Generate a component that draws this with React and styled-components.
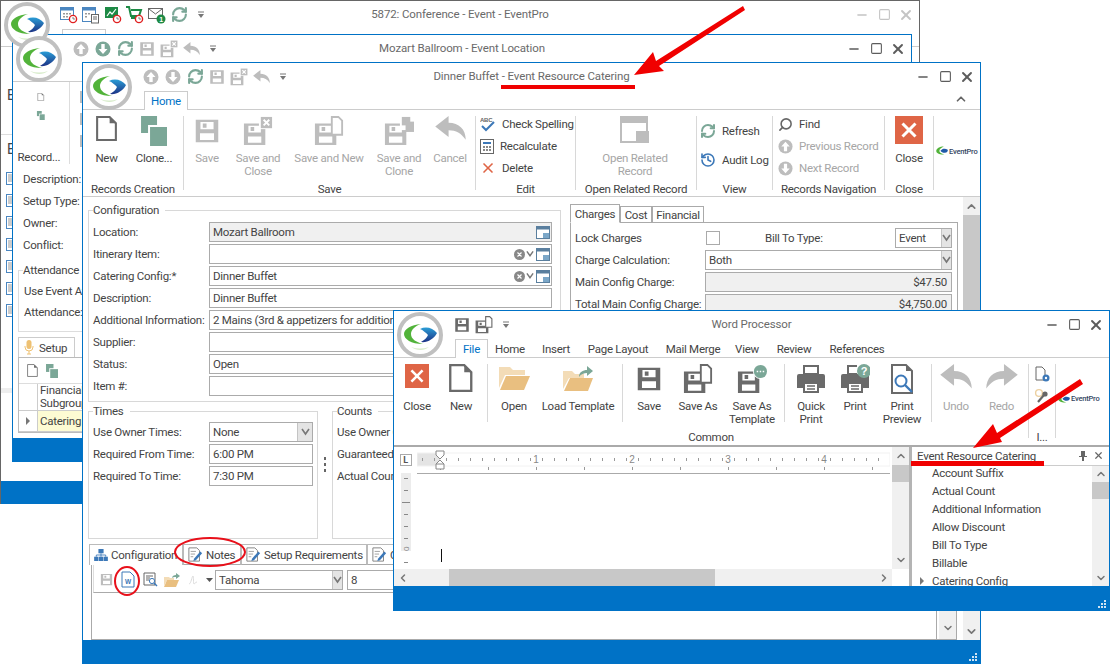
import React from 'react';
import styled, { createGlobalStyle } from 'styled-components';
import { X, RefreshCw, History, Search, ChevronUp, ChevronDown, ChevronLeft, ChevronRight, Minus, Square } from 'lucide-react';

const GlobalStyle = createGlobalStyle`
  html, body { margin: 0; padding: 0; background: #fff; }
  body { font-family: Roboto, "Liberation Sans", sans-serif; font-size: 11.5px; letter-spacing: -0.25px; color: #444; }
`;

const BLUE = '#0072c6';
const TEAL = '#7ba797';
const LIGHT = '#bdbdbd';
const DARK = '#6a6a6a';
const ORANGE = '#df6546';

const Desktop = styled.div`
  position: relative;
  width: 1110px;
  height: 664px;
  overflow: hidden;
  background: #fff;
`;

const Window = styled.div`
  position: absolute;
  left: ${p => p.$x}px;
  top: ${p => p.$y}px;
  width: ${p => p.$w}px;
  height: ${p => p.$h}px;
  box-sizing: border-box;
  border: 1px solid ${p => p.$border || BLUE};
  border-bottom: none;
  background: #fff;
  display: flex;
  flex-direction: column;
  overflow: hidden;
`;

const LogoSpot = styled.div`
  position: absolute;
  left: ${p => p.$x ?? 3}px;
  top: ${p => p.$y ?? 1}px;
  z-index: 2;
`;

const TitleRow = styled.div`
  display: grid;
  grid-template-columns: 1fr auto 1fr;
  align-items: center;
  height: ${p => p.$h || 27}px;
  flex: none;
`;

const QuickBar = styled.div`
  display: flex;
  align-items: center;
  padding-left: 57px;
`;

const QuickBtn = styled.span`
  width: 22px;
  height: 20px;
  flex: none;
  display: flex;
  align-items: center;
  justify-content: center;
`;

const Title = styled.div`
  font-size: 11.5px;
  letter-spacing: -0.12px;
  color: #6a6a6a;
  white-space: nowrap;
  padding-bottom: 2px;
`;

const WinButtons = styled.div`
  justify-self: end;
  display: flex;
  padding-right: 2px;
  color: ${p => p.$dim ? '#c4c4c4' : '#5c5c5c'};
`;

const WinBtn = styled.span`
  width: 22px;
  height: 20px;
  display: flex;
  align-items: center;
  justify-content: center;
`;

const TabRow = styled.div`
  display: flex;
  align-items: flex-end;
  height: ${p => p.$h || 20}px;
  flex: none;
  box-sizing: border-box;
  border-bottom: 1px solid #ccc;
  padding-left: ${p => p.$pad || 61}px;
`;

const TopTab = styled.div`
  height: 100%;
  box-sizing: border-box;
  display: flex;
  align-items: center;
  justify-content: center;
  width: ${p => p.$w}px;
  margin-bottom: -1px;
  background: ${p => p.$active ? '#fff' : 'transparent'};
  color: ${p => p.$active ? BLUE : '#444'};
  border: 1px solid ${p => p.$active ? '#ccc' : 'transparent'};
  border-bottom: none;
`;

const CollapseBtn = styled.span`
  margin: 0 12px 3px auto;
  display: flex;
  color: #666;
`;

const Ribbon = styled.div`
  display: flex;
  height: ${p => p.$h || 87}px;
  flex: none;
  box-sizing: border-box;
  padding-top: 6px;
  border-bottom: ${p => p.$thick ? '2px solid #aaa' : '1px solid #ccc'};
`;

const Group = styled.div`
  width: ${p => p.$w}px;
  flex: none;
  display: flex;
  flex-direction: column;
`;

const GroupBody = styled.div`
  height: 66px;
  flex: none;
  display: flex;
  padding-left: ${p => p.$pad || 0}px;
`;

const GroupLabel = styled.div`
  text-align: center;
  line-height: 14px;
  white-space: nowrap;
`;

const Sep = styled.div`
  width: 1px;
  height: ${p => p.$h || 74}px;
  flex: none;
  background: #d8d8d8;
`;

const BigBtn = styled.div`
  width: ${p => p.$w}px;
  flex: none;
  display: flex;
  flex-direction: column;
  align-items: center;
  text-align: center;
  color: ${p => p.$off ? '#a6a6a6' : '#444'};
  line-height: 13px;
`;

const BigIcon = styled.div`
  height: 36px;
  flex: none;
  display: flex;
  align-items: flex-start;
  justify-content: center;
`;

const SmallStack = styled.div`
  display: flex;
  flex-direction: column;
  gap: ${p => p.$gap ?? 6}px;
  padding-top: ${p => p.$top ?? 0}px;
  padding-left: ${p => p.$pad || 0}px;
`;

const SmallBtn = styled.div`
  height: 16px;
  display: flex;
  align-items: center;
  gap: 6px;
  white-space: nowrap;
  color: ${p => p.$off ? '#a6a6a6' : '#444'};
`;

const Status = styled.div`
  height: ${p => p.$h || 22}px;
  flex: none;
  margin-top: auto;
  background: ${BLUE};
  display: flex;
  justify-content: flex-end;
  align-items: flex-end;
  padding: 0 2px 2px 0;
`;

/* back windows, only the left strip shows */
const BackRow = styled.div`
  height: ${p => p.$h || 22}px;
  flex: none;
  display: flex;
  align-items: center;
  padding-left: ${p => p.$pad || 5}px;
  white-space: nowrap;
`;

const BackStrip = styled.div`
  height: ${p => p.$h}px;
  flex: none;
  box-sizing: border-box;
  border-bottom: ${p => p.$line ? '1px solid #ddd' : 'none'};
  padding: ${p => p.$pad || '0'};
  font-size: 14px;
`;

const GrayBlock = styled.div`
  height: 5px;
  width: 11px;
  background: #eee;
  flex: none;
`;

const BackFooter = styled.div`
  height: 20px;
  flex: none;
  margin-top: auto;
  display: flex;
  align-items: center;
  gap: 6px;
  padding-left: 12px;
`;

const BackRibbon = styled.div`
  height: 86px;
  flex: none;
  display: flex;
`;

const BackGroup = styled.div`
  width: 56px;
  flex: none;
  display: flex;
  flex-direction: column;
  align-items: center;
  gap: 10px;
  padding-top: 11px;
  border-right: 1px solid #ddd;
  margin-bottom: 4px;
`;

const BackGroupLabel = styled.div`
  margin-top: 20px;
  width: 56px;
  padding-left: 9px;
  white-space: nowrap;
`;

const BackIcons = styled.div`
  display: flex;
  flex-direction: column;
  gap: 6px;
  padding: 7px 0 0 8px;
`;

const BackFields = styled.div`
  display: flex;
  flex-direction: column;
  padding: 0 0 0 9px;
`;

const BackFieldset = styled.fieldset`
  margin: 8px 0 0 5px;
  height: 68px;
  box-sizing: border-box;
  border: 1px solid #ddd;
  padding: 3px 0 0 4px;
  min-width: 0;
  flex: none;
`;

const BackTabs = styled.div`
  display: flex;
  height: 20px;
  margin: 5px 0 0 5px;
  flex: none;
`;

const BackTab = styled.div`
  display: flex;
  align-items: center;
  gap: 5px;
  box-sizing: border-box;
  width: 57px;
  padding-left: 5px;
  border: 1px solid #ccc;
  border-bottom: none;
`;

const BackPanel = styled.div`
  margin-left: 5px;
  border: 1px solid #bbb;
  height: 76px;
  box-sizing: border-box;
  flex: none;
`;

const BackToolbar = styled.div`
  height: 25px;
  display: flex;
  align-items: center;
  gap: 8px;
  padding-left: 8px;
  border-bottom: 1px solid #ddd;
`;

const BackHead = styled.div`
  height: 26px;
  display: flex;
  border-bottom: 1px solid #ccc;
`;

const BackCorner = styled.div`
  width: 18px;
  flex: none;
  border-right: 1px solid #ccc;
  display: flex;
  align-items: center;
  justify-content: center;
  color: #666;
`;

const BackCell = styled.div`
  padding-left: 2px;
  line-height: 13px;
  flex: 1;
  background: ${p => p.$yellow ? '#fdfbd3' : 'transparent'};
  display: flex;
  align-items: center;
  white-space: nowrap;
`;

const BackGridRow = styled.div`
  height: 20px;
  display: flex;
  border-bottom: 1px solid #ccc;
`;

/* main form */
const FormTop = styled.div`
  display: flex;
  height: 347px;
  flex: none;
`;

const Body = styled.div`
  flex: 1;
  display: flex;
  min-height: 0;
`;

const Main = styled.div`
  flex: 1;
  min-width: 0;
  display: flex;
  flex-direction: column;
`;

const LeftCol = styled.div`
  width: 481px;
  flex: none;
  box-sizing: border-box;
  padding: 7px 0 0 5px;
  display: flex;
  flex-direction: column;
`;

const FieldBox = styled.fieldset`
  margin: 0;
  box-sizing: border-box;
  width: ${p => p.$w}px;
  height: ${p => p.$h}px;
  border: 1px solid #d8d8d8;
  padding: ${p => p.$top ?? 5}px ${p => p.$right ?? 8}px 0 4px;
  min-width: 0;
  flex: none;
`;

const Legend = styled.legend`
  padding: 0 6px 0 0;
  line-height: 13px;
`;

const FormRows = styled.div`
  display: grid;
  grid-template-columns: 116px 1fr;
  grid-auto-rows: 20px;
  row-gap: ${p => p.$gap ?? 2}px;
  align-items: center;
  white-space: nowrap;
`;

const Input = styled.div`
  height: 20px;
  box-sizing: border-box;
  border: 1px solid #ababab;
  background: ${p => p.$gray ? '#f0f0f0' : '#fff'};
  display: flex;
  align-items: center;
  padding-left: 3px;
  overflow: hidden;
  justify-content: ${p => p.$end ? 'flex-end' : 'flex-start'};
  padding-right: ${p => p.$end ? '4px' : '0'};
  white-space: nowrap;
  ${p => p.$w ? `width: ${p.$w}px; flex: none;` : ''}
`;

const InputText = styled.span`
  flex: 1;
  min-width: 0;
  overflow: hidden;
`;

const Adorn = styled.span`
  width: ${p => p.$w || 14}px;
  height: 100%;
  flex: none;
  display: flex;
  align-items: center;
  justify-content: center;
  color: #777;
  background: ${p => p.$gray ? '#e4e4e4' : 'transparent'};
  border-left: ${p => p.$gray ? '1px solid #c4c4c4' : 'none'};
`;

const LowerRow = styled.div`
  display: flex;
  margin-top: 3px;
  height: 136px;
`;

const Splitter = styled.div`
  width: 14px;
  flex: none;
  display: flex;
  flex-direction: column;
  align-items: center;
  gap: 3px;
  padding-top: 52px;
  margin-top: 0;
`;

const Dot = styled.span`
  width: 2px;
  height: 3px;
  background: #666;
`;

const RightCol = styled.div`
  flex: 1;
  min-width: 0;
  padding: 6px 5px 0 6px;
  display: flex;
  flex-direction: column;
`;

const PageTabs = styled.div`
  display: flex;
  align-items: flex-end;
  height: 19px;
  flex: none;
`;

const PageTab = styled.div`
  width: ${p => p.$w}px;
  height: ${p => p.$active ? 19 : 17}px;
  box-sizing: border-box;
  border: 1px solid #aaa;
  border-bottom: ${p => p.$active ? '1px solid #fff' : '1px solid #aaa'};
  margin-bottom: -1px;
  background: #fff;
  z-index: 1;
  display: flex;
  align-items: center;
  justify-content: center;
`;

const PagePanel = styled.div`
  flex: 1;
  border: 1px solid #aaa;
  padding: 5px 5px 0 4px;
`;

const ChargeGrid = styled(FormRows)`
  grid-template-columns: 130px 1fr;
`;

const LockCell = styled.div`
  display: flex;
  align-items: center;
  height: 20px;
`;

const Check = styled.span`
  width: 12px;
  height: 12px;
  border: 1px solid #aaa;
  margin-left: 1px;
  flex: none;
`;

const BillLabel = styled.span`
  margin-left: 45px;
  flex: 1;
`;

const VScroll = styled.div`
  width: 17px;
  flex: none;
  background: #f0f0f0;
  display: flex;
  flex-direction: column;
  overflow: hidden;
  align-self: stretch;
`;

const ScrollArrow = styled.div`
  height: ${p => p.$h || 18}px;
  flex: none;
  display: flex;
  align-items: center;
  justify-content: center;
  color: #777;
  margin-top: ${p => p.$end ? 'auto' : '0'};
`;

const ScrollThumb = styled.div`
  height: ${p => p.$h}px;
  flex: none;
  background: #c8c8c8;
`;

const NotesArea = styled.div`
  flex: 1;
  min-height: 0;
  display: flex;
  flex-direction: column;
  padding: 0 6px 0 6px;
`;

const NoteTabs = styled.div`
  display: flex;
  height: 21px;
  flex: none;
  align-items: flex-end;
  white-space: nowrap;
  overflow: hidden;
`;

const NoteTab = styled.div`
  width: ${p => p.$w}px;
  height: 21px;
  flex: none;
  box-sizing: border-box;
  display: flex;
  align-items: center;
  gap: 3px;
  padding-left: 4px;
  border: 1px solid #bbb;
  border-bottom: ${p => p.$active ? 'none' : '1px solid #aaa'};
  background: #fff;
  overflow: hidden;
  svg { flex: none; }
`;

const NotePanel = styled.div`
  flex: 1;
  min-height: 0;
  margin-left: 2px;
  border: 1px solid #aaa;
  border-top: none;
  display: flex;
  overflow: hidden;
`;

const NoteEditor = styled.div`
  flex: 1;
  min-width: 0;
  display: flex;
  flex-direction: column;
  border-right: 1px solid #aaa;
  margin-right: 2px;
`;

const NoteToolbar = styled.div`
  height: 28px;
  flex: none;
  margin-left: 1px;
  box-sizing: border-box;
  border-bottom: 1px solid #aaa;
  border-left: 1px solid #ddd;
  display: flex;
  align-items: center;
  padding: 2px 0 0 1px;
`;

const ToolIcon = styled.span`
  width: ${p => p.$w || 22}px;
  flex: none;
  display: flex;
  align-items: center;
  justify-content: center;
`;

const NoteScroll = styled(VScroll)`
  justify-content: flex-end;
`;

/* word processor */
const Workspace = styled.div`
  flex: 1;
  min-height: 0;
  display: flex;
`;

const DocPane = styled.div`
  flex: 1;
  min-width: 0;
  display: flex;
  flex-direction: column;
`;

const DocTop = styled.div`
  flex: 1;
  min-height: 0;
  display: flex;
`;

const RulerSide = styled.div`
  width: 23px;
  flex: none;
  display: flex;
  flex-direction: column;
  align-items: center;
  padding-top: 7px;
  gap: 7px;
`;

const CornerBtn = styled.span`
  width: 10px;
  height: 10px;
  border: 1px solid #aaa;
  display: flex;
  align-items: center;
  justify-content: center;
  font-size: 9px;
  font-weight: 700;
  line-height: 1;
  color: #555;
`;

const Page = styled.div`
  flex: 1;
  min-width: 0;
  display: flex;
  flex-direction: column;
`;

const Caret = styled.div`
  width: 1px;
  height: 13px;
  background: #111;
  margin: 75px 0 0 24px;
`;

const HScroll = styled.div`
  height: 17px;
  flex: none;
  background: #f0f0f0;
  display: flex;
  align-items: center;
  margin-right: 17px;
`;

const HArrow = styled.span`
  width: 17px;
  flex: none;
  display: flex;
  justify-content: center;
  color: #777;
  margin-left: ${p => p.$end ? 'auto' : '0'};
`;

const HThumb = styled.div`
  width: ${p => p.$w}px;
  height: 17px;
  flex: none;
  margin-left: 38px;
  background: #c8c8c8;
`;

const TaskPane = styled.div`
  width: 200px;
  flex: none;
  box-sizing: border-box;
  border-left: 3px solid #b4b4b4;
  display: flex;
  flex-direction: column;
`;

const TaskHead = styled.div`
  height: 18px;
  flex: none;
  box-sizing: border-box;
  display: flex;
  align-items: center;
  padding: 0 5px 1px 5px;
  gap: 6px;
`;

const TaskName = styled.span`
  flex: 1;
`;

const TaskBody = styled.div`
  flex: 1;
  min-height: 0;
  display: flex;
  overflow: hidden;
  border-top: 1px solid #ccc;
`;

const TaskList = styled.div`
  flex: 1;
  display: flex;
  flex-direction: column;
`;

const TaskItem = styled.div`
  height: 18px;
  flex: none;
  display: flex;
  align-items: center;
  position: relative;
  padding-left: 20px;
  margin-top: ${p => p.$first ? '-2px' : '0'};
`;

const Caretlet = styled.span`
  position: absolute;
  left: 8px;
  width: 0;
  height: 0;
  border-left: 4px solid #777;
  border-top: 4px solid transparent;
  border-bottom: 4px solid transparent;
`;

const RowCaret = styled(Caretlet)`
  position: static;
`;

const ExtraGroup = styled(Group)`
  align-items: center;
`;

const MiniLogoCell = styled.div`
  flex: 1;
  display: flex;
  align-items: center;
  padding: 0 0 ${p => p.$bottom ?? 16}px 2px;
`;

const MiniName = styled.span`
  font-size: 7.5px;
  font-weight: 500;
  letter-spacing: -0.2px;
  color: #33455f;
  margin-left: 1px;
`;

const Annotations = styled.svg`
  position: absolute;
  left: 0;
  top: 0;
  z-index: 5;
  pointer-events: none;
`;

/* icons */
const Logo = ({ s = 46 }) => (
  <svg width={s} height={s} viewBox="0 0 46 46">
    <defs>
      <linearGradient id="lens" x1="0" y1="0" x2="0" y2="1">
        <stop offset="0" stopColor="#2a9dd6" />
        <stop offset="1" stopColor="#1c3285" />
      </linearGradient>
    </defs>
    <circle cx="23" cy="23" r="21" fill="#fff" stroke="#c0c0c0" strokeWidth="4" />
    <path d="M24 12C14 13 7 17 7 22 7 27 14 32 26 32 19 30 14 27 14 22 14 18 18 14 24 12Z" fill="#52b33a" />
    <path d="M23 17C29 14 36 16 40 21 37 27 30 31 24 30 27 28 30 26 31 23 29 21 26 18 23 17Z" fill="url(#lens)" />
    <path d="M14 35C20 39 27 39 32 35 26 37 20 37 14 35Z" fill="#d8eccb" />
  </svg>
);

const MiniLogo = () => (
  <svg width="12" height="12" viewBox="0 0 46 46">
    <path d="M30 6C14 6 1 13 1 23 1 32 16 38 32 36 20 33 13 29 13 23 13 16 20 10 30 6Z" fill="#52b33a" />
    <path d="M17 22C24 13 35 12 45 18 46 23 43 27 38 29 30 32 23 29 17 22Z" fill="#1f5aa8" />
  </svg>
);

const DocIcon = ({ s = 24, c = DARK, w = 2 }) => (
  <svg width={s * 0.84} height={s} viewBox="0 0 20 24">
    <path d="M1 1H13L19 7V23H1Z" fill="#fff" stroke={c} strokeWidth={w} />
    <path d="M13 1V7H19Z" fill={c} />
  </svg>
);

const CloneIcon = ({ s = 30 }) => (
  <svg width={s * 0.87} height={s} viewBox="0 0 26 30">
    <rect x="0" y="0" width="16" height="17" fill={TEAL} />
    <rect x="7" y="9" width="19" height="21" fill="#fff" />
    <rect x="9" y="11" width="17" height="19" fill={TEAL} />
  </svg>
);

const Floppy = ({ x = 0, y = 0, k = 1, c }) => (
  <path
    transform={`translate(${x} ${y}) scale(${k})`}
    fill={c}
    fillRule="evenodd"
    d="M0 0H24V24H0ZM5 2.5V10H19V2.5ZM7.5 4H11.5V8.5H7.5ZM4.5 14.5V21.5H19.5V14.5Z"
  />
);

const SaveIcon = ({ kind, s = 30, c = LIGHT }) => (
  <svg width={s} height={s} viewBox="0 0 32 32">
    {!kind && <Floppy x={4} y={4} c={c} />}
    {kind && <Floppy x={1} y={8} k={0.95} c={c} />}
    {kind === 'close' && (
      <>
        <rect x="17" y="0" width="15" height="14" fill="#fff" />
        <rect x="19" y="1" width="12" height="12" fill={c} />
        <path d="M22 4l6 6M28 4l-6 6" stroke="#fff" strokeWidth="2" />
      </>
    )}
    {kind === 'new' && (
      <path d="M19 1h7l4 4v15H19Z" fill="#fff" stroke={c} strokeWidth="2" />
    )}
    {kind === 'clone' && (
      <>
        <rect x="17" y="0" width="15" height="15" fill="#fff" />
        <rect x="19" y="1" width="9" height="9" fill={c} />
        <rect x="23" y="6" width="9" height="11" fill={c} />
      </>
    )}
    {kind === 'dots' && (
      <>
        <circle cx="25" cy="8" r="8" fill="#fff" />
        <circle cx="25" cy="8" r="7" fill={TEAL} />
        <path d="M21 8h1.6M24.2 8h1.6M27.4 8h1.6" stroke="#fff" strokeWidth="1.8" />
      </>
    )}
  </svg>
);

const BackArrow = ({ s = 30, c = LIGHT, flip }) => (
  <svg width={s} height={s * 0.8} viewBox="0 0 32 26" style={flip ? { transform: 'scaleX(-1)' } : undefined}>
    <path d="M0 11L14 0V7C25 7 32 14 32 25 27 18 22 15 14 15V22Z" fill={c} />
  </svg>
);

const CircleArrow = ({ down, c = LIGHT, s = 16 }) => (
  <svg width={s} height={s} viewBox="0 0 16 16" style={down ? { transform: 'rotate(180deg)' } : undefined}>
    <circle cx="8" cy="8" r="7.5" fill={c} />
    <path d="M8 3L12.5 8H9.7V13H6.3V8H3.5Z" fill="#fff" />
  </svg>
);

const Caret2 = () => (
  <svg width="8" height="8" viewBox="0 0 8 8">
    <path d="M1 1h6" stroke="#777" strokeWidth="1" />
    <path d="M1 3h6L4 7Z" fill="#777" />
  </svg>
);

const Refresh = ({ s = 17 }) => <RefreshCw size={s} color={TEAL} strokeWidth={3} />;

const SpellIcon = () => (
  <svg width="16" height="16" viewBox="0 0 16 16">
    <text x="0" y="6" fontSize="6" fontWeight="700" fontFamily="Liberation Sans" fill="#666">ABC</text>
    <path d="M2 10l4 4 8-8" fill="none" stroke="#3c78b8" strokeWidth="2" />
  </svg>
);

const CalcIcon = () => (
  <svg width="14" height="15" viewBox="0 0 14 15">
    <rect x="0.5" y="0.5" width="13" height="14" fill="#fff" stroke="#666" />
    <rect x="3" y="3" width="8" height="2" fill="#3c78b8" />
    <path d="M3 7h2v2H3zM6 7h2v2H6zM9 7h2v2H9zM3 10h2v2H3zM6 10h2v2H6zM9 10h2v2H9z" fill="#888" />
  </svg>
);

const OpenRelatedIcon = () => (
  <svg width="30" height="28" viewBox="0 0 30 28">
    <path d="M1 1h26v25H1Z" fill="#fff" stroke={LIGHT} strokeWidth="2" />
    <rect x="1" y="1" width="26" height="6" fill={LIGHT} />
    <rect x="16" y="15" width="13" height="12" fill={LIGHT} />
  </svg>
);

const CloseBig = ({ s = 28 }) => (
  <svg width={s} height={s} viewBox="0 0 28 28">
    <rect width="28" height="28" fill={ORANGE} />
    <path d="M7.5 7.5l13 13M20.5 7.5l-13 13" stroke="#fff" strokeWidth="3" />
  </svg>
);

const Folder = () => (
  <svg width="31" height="28" viewBox="0 0 31 28">
    <path d="M0 3h11l3 3h12v5H6L0 24Z" fill="#f3dcb7" />
    <path d="M7 12h24l-6 14H1Z" fill="#e9bf80" />
  </svg>
);

const LoadFolder = () => (
  <svg width="31" height="28" viewBox="0 0 31 28">
    <path d="M0 7h9l3 3h9v4H6L0 25Z" fill="#f3dcb7" />
    <path d="M7 14h23l-5 13H1Z" fill="#e9bf80" />
    <path d="M16 13C16 8 20 6 24 6V2L30 7 24 12V9C21 9 18 10 16 13Z" fill={TEAL} />
  </svg>
);

const Printer = ({ help }) => (
  <svg width="30" height="30" viewBox="0 0 30 30">
    <path d="M8 2h14v8H8Z" fill="none" stroke={DARK} strokeWidth="2" />
    <path d="M3 10h24a2 2 0 0 1 2 2v12H23v-5H7v5H1V12a2 2 0 0 1 2-2Z" fill={DARK} />
    <path d="M8 19h14v9H8Z" fill="#fff" stroke={DARK} strokeWidth="2" />
    <path d="M11 22h8M11 25h8" stroke={DARK} strokeWidth="1.5" />
    {help && (
      <>
        <rect x="17" y="0" width="13" height="10" fill="#fff" />
        <circle cx="24" cy="7" r="7" fill={TEAL} />
        <text x="24" y="11" fontSize="11" fontWeight="700" textAnchor="middle" fontFamily="Liberation Sans" fill="#fff">?</text>
      </>
    )}
  </svg>
);

const PreviewIcon = () => (
  <svg width="26" height="30" viewBox="0 0 26 30">
    <path d="M3 1h14l6 6v22H3Z" fill="#fff" stroke={DARK} strokeWidth="2" />
    <path d="M17 1v6h6Z" fill={DARK} />
    <circle cx="12" cy="17" r="5.5" fill="#fff" stroke="#3c78b8" strokeWidth="2" />
    <path d="M16 21l7 7" stroke="#3c78b8" strokeWidth="2.4" />
  </svg>
);

const GearDoc = () => (
  <svg width="16" height="16" viewBox="0 0 16 16">
    <path d="M2 1h6l3 3v10H2Z" fill="#fff" stroke="#666" />
    <circle cx="12" cy="12" r="3.5" fill="#3c78b8" />
    <circle cx="12" cy="12" r="1.2" fill="#fff" />
  </svg>
);

const KeyIcon = () => (
  <svg width="16" height="16" viewBox="0 0 16 16">
    <circle cx="5" cy="5" r="3.4" fill="none" stroke="#ecd0a0" strokeWidth="1.4" />
    <circle cx="11" cy="6" r="2.6" fill="#666" />
    <path d="M10 7L4 14" stroke="#666" strokeWidth="2.2" />
  </svg>
);

const ListIcon = () => (
  <svg width="8" height="13" viewBox="0 0 8 13">
    <rect x="0.5" y="0.5" width="7" height="12" fill="#fff" stroke="#4b86c0" />
    <path d="M2 3h4M2 5h4M2 7h4M2 9h4" stroke="#999" />
  </svg>
);

const ClearIcon = () => (
  <svg width="11" height="11" viewBox="0 0 11 11">
    <circle cx="5.5" cy="5.5" r="5.5" fill="#888" />
    <path d="M3.5 3.5l4 4M7.5 3.5l-4 4" stroke="#fff" strokeWidth="1.2" />
  </svg>
);

const Chev = ({ c = '#777' }) => (
  <svg width="9" height="8" viewBox="0 0 9 8">
    <path d="M1 1l3.5 5L8 1" fill="none" stroke={c} strokeWidth="1.6" />
  </svg>
);

const WinPick = () => (
  <svg width="14" height="13" viewBox="0 0 14 13">
    <rect x="0.5" y="0.5" width="13" height="12" fill="#fff" stroke="#5a7f9e" />
    <rect x="0.5" y="0.5" width="13" height="3" fill="#5a7f9e" />
    <rect x="7" y="7" width="6" height="5" fill="#7ba7c8" />
  </svg>
);

const NoteIcon = ({ s = 15 }) => (
  <svg width={s} height={s} viewBox="0 0 17 17">
    <path d="M1 1h9l3 3v12H1Z" fill="#fff" stroke="#777" />
    <path d="M3 5h6M3 8h5M3 11h3" stroke="#999" />
    <path d="M7 13l7-8 2 2-7 8-3 1Z" fill="#3c78b8" />
  </svg>
);

const OrgIcon = () => (
  <svg width="14" height="12" viewBox="0 0 16 14">
    <rect x="5" y="0" width="6" height="5" fill="#3c78b8" />
    <rect x="0" y="9" width="5" height="5" fill="#3c78b8" />
    <rect x="11" y="9" width="5" height="5" fill="#3c78b8" />
    <rect x="5.5" y="9" width="5" height="5" fill="#3c78b8" />
    <path d="M8 5v2M2.5 9V7h11v2M8 7v2" fill="none" stroke="#3c78b8" />
  </svg>
);

const WordDoc = () => (
  <svg width="14" height="17" viewBox="0 0 14 17">
    <path d="M1 1h8l4 4v11H1Z" fill="#fff" stroke="#3c78b8" />
    <text x="7" y="13" fontSize="6.5" fontWeight="700" textAnchor="middle" fontFamily="Liberation Sans" fill="#3c78b8">W</text>
  </svg>
);

const SmallFolder = () => (
  <svg width="16" height="14" viewBox="0 0 16 14">
    <path d="M0 4h5l1 1h4v2H3L0 13Z" fill="#f3dcb7" />
    <path d="M3 7h12l-3 7H0Z" fill="#e9bf80" />
    <path d="M8 5C8 3 10 2 12 2V0l4 3-4 3V4C10 4 9 4 8 5Z" fill={TEAL} />
  </svg>
);

const PreviewSmall = () => (
  <svg width="15" height="15" viewBox="0 0 15 15">
    <path d="M1 1h11v12H1Z" fill="#fff" stroke="#666" />
    <path d="M3 4h7M3 6h4M3 8h3" stroke="#666" />
    <circle cx="9" cy="9" r="2.6" fill="#fff" stroke="#3c78b8" />
    <path d="M11 11l3 3" stroke="#3c78b8" strokeWidth="1.5" />
  </svg>
);

const Squiggle = () => (
  <svg width="10" height="12" viewBox="0 0 10 12">
    <path d="M1 10C3 10 4 2 5 2s0 8 1 8 1-2 3-2" fill="none" stroke="#ddd" />
  </svg>
);

const TinyCaret = () => (
  <svg width="7" height="4" viewBox="0 0 7 4"><path d="M0 0h7L3.5 4Z" fill="#555" /></svg>
);

const Mic = () => (
  <svg width="10" height="15" viewBox="0 0 10 15">
    <rect x="2.5" y="0" width="5" height="9" rx="2.5" fill="#eec173" />
    <path d="M1 6v1a4 4 0 0 0 8 0V6M5 11v3M3 14h4" fill="none" stroke="#eec173" />
  </svg>
);

const Bed = () => (
  <svg width="15" height="12" viewBox="0 0 15 12">
    <path d="M0 0h1.5v6H15v5h-1.5V9h-12v2H0Z" fill={ORANGE} />
    <rect x="2.5" y="2.5" width="3" height="3" fill={ORANGE} />
    <path d="M6.5 2.5h7L15 5.5H6.5Z" fill={ORANGE} />
  </svg>
);

const Factory = () => (
  <svg width="15" height="15" viewBox="0 0 15 15">
    <path d="M5 0h3v5H15v10H0V5H5Z" fill="#4b7fb5" />
    <path d="M3 9h2v2H3zM7 9h2v2H7zM11 9h2v2h-2z" fill="#fff" />
  </svg>
);

const Card = () => (
  <svg width="14" height="15" viewBox="0 0 14 15">
    <rect x="0.5" y="0.5" width="11" height="14" fill="#fff" stroke="#4b7fb5" />
    <circle cx="6" cy="5" r="2" fill="#4b7fb5" />
    <path d="M2.5 11c0-2.5 7-2.5 7 0Z" fill="#4b7fb5" />
    <path d="M12 3h2v3h-2zM12 8h2v3h-2z" fill="#4b7fb5" />
  </svg>
);

const CalClock = ({ kind }) => (
  <svg width="18" height="18" viewBox="0 0 18 18">
    {kind === 'cal' && (
      <>
        <rect x="0.5" y="1.5" width="13" height="12" fill="#fff" stroke="#4b86c0" />
        <rect x="0.5" y="1.5" width="13" height="3" fill="#4b86c0" />
        <path d="M3 7h2v1.5H3zM6 7h2v1.5H6zM9 7h2v1.5H9zM3 10h2v1.5H3zM6 10h2v1.5H6z" fill="#999" />
      </>
    )}
    {kind === 'doc' && (
      <>
        <rect x="0.5" y="1.5" width="13" height="14" fill="#fff" stroke="#4b86c0" />
        <rect x="0.5" y="1.5" width="13" height="3" fill="#4b86c0" />
        <path d="M3 7h2v1.5H3zM6 7h2v1.5H6zM3 10h2v1.5H3z" fill="#999" />
        <rect x="9.5" y="8.5" width="7" height="8.5" fill="#fff" stroke="#666" />
        <path d="M11 11h4M11 13h4" stroke="#666" />
      </>
    )}
    {kind === 'chart' && (
      <>
        <rect x="1" y="1" width="13" height="11" fill="#1d8a45" />
        <path d="M3 10l3-4 2 2 4-5" fill="none" stroke="#fff" strokeWidth="1.2" />
      </>
    )}
    {kind === 'cart' && (
      <path d="M0 1h3l2 9h8l2-6H5M5 12h8" fill="none" stroke="#1d8a45" strokeWidth="2" />
    )}
    {kind === 'mail' && (
      <>
        <rect x="0.5" y="2.5" width="14" height="10" fill="#fff" stroke="#666" />
        <path d="M1 3l6.5 5L14 3" fill="none" stroke="#666" />
        <circle cx="13" cy="13" r="4.5" fill="#1d8a45" />
        <text x="13" y="16" fontSize="7" fontWeight="700" textAnchor="middle" fontFamily="Liberation Sans" fill="#fff">1</text>
      </>
    )}
    {kind !== 'doc' && kind !== 'mail' && (
      <>
        <circle cx="13" cy="13" r="3.6" fill="#fff" stroke="#e02020" strokeWidth="1.4" />
        <path d="M13 11v2h2" fill="none" stroke="#666" strokeWidth="0.8" />
      </>
    )}
  </svg>
);

const Grip = () => (
  <svg width="9" height="9" viewBox="0 0 9 9">
    <path d="M6 0h2v2H6zM3 3h2v2H3zM6 3h2v2H6zM0 6h2v2H0zM3 6h2v2H3zM6 6h2v2H6z" fill="#cfe3f3" />
  </svg>
);

const HRuler = () => {
  const ticks = [];
  for (let x = 5; x < 470; x += 12) {
    if ((x - 23 + 48) % 96 === 0) continue;
    ticks.push(x);
  }
  const labels = [];
  for (let i = 0; i < 5; i++) labels.push(23 + i * 96);
  return (
    <svg width="473" height="27" viewBox="0 0 473 27" style={{ flex: 'none', display: 'block' }}>
      <rect x="0" y="6" width="23" height="13" fill="#e4e4e4" />
      <rect x="0" y="6" width="473" height="13" fill="none" stroke="#f2f2f2" />
      {ticks.map(x => <rect key={x} x={x} y={(x - 23) % 48 === 0 ? 8 : 11} width="1" height={(x - 23) % 48 === 0 ? 8 : 3} fill="#999" />)}
      {labels.slice(1).map((x, i) => (
        <text key={x} x={x} y="16" fontSize="10" textAnchor="middle" fontFamily="Liberation Sans" fill="#888">{i + 1}</text>
      ))}
      {labels.map(x => <rect key={x} x={x} y="20" width="1" height="3" fill="#999" />)}
      {labels.map(x => <rect key={x + 48} x={x + 48} y="20" width="1" height="3" fill="#999" />)}
      <path d="M19 4h8v4l-4 4-4-4Z" fill="#fff" stroke="#888" />
      <path d="M23 13l4 4v5h-8v-5Z" fill="#fff" stroke="#888" />
      <path d="M19 17h8" stroke="#888" />
      <rect x="0" y="26" width="473" height="1" fill="#aaa" />
    </svg>
  );
};

const VRuler = () => (
  <svg width="10" height="95" viewBox="0 0 10 95" style={{ display: 'block', flex: 'none' }}>
    <rect width="10" height="78" fill="#ececec" />
    {[5, 17, 41, 53, 65, 89].map(y => <rect key={y} x="3" y={y} width="4" height="1" fill="#888" />)}
    <rect x="1" y="29" width="8" height="1" fill="#888" />
    <text x="-78" y="8" fontSize="8" fontFamily="Liberation Sans" fill="#888" transform="rotate(-90)">0</text>
  </svg>
);

const catering = [
  ['Location:', 'Mozart Ballroom'],
  ['Itinerary Item:', ''],
  ['Catering Config:*', 'Dinner Buffet'],
  ['Description:', 'Dinner Buffet'],
  ['Additional Information:', '2 Mains (3rd & appetizers for additional charge)'],
  ['Supplier:', ''],
  ['Status:', 'Open'],
  ['Item #:', ''],
];

const taskItems = ['Account Suffix', 'Actual Count', 'Additional Information', 'Allow Discount', 'Bill To Type', 'Billable', 'Catering Config'];

const WinControls = ({ dim }) => (
  <WinButtons $dim={dim}>
    <WinBtn><Minus size={14} strokeWidth={2.6} /></WinBtn>
    <WinBtn><Square size={13} strokeWidth={2} /></WinBtn>
    <WinBtn><X size={16} strokeWidth={2.8} /></WinBtn>
  </WinButtons>
);

const EventWindow = () => (
  <Window $x={0} $y={0} $w={920} $h={504} $border="#666">
    <LogoSpot $y={1}><Logo /></LogoSpot>
    <TitleRow>
      <QuickBar>
        <QuickBtn><CalClock kind="cal" /></QuickBtn>
        <QuickBtn><CalClock kind="doc" /></QuickBtn>
        <QuickBtn><CalClock kind="chart" /></QuickBtn>
        <QuickBtn><CalClock kind="cart" /></QuickBtn>
        <QuickBtn><CalClock kind="mail" /></QuickBtn>
        <QuickBtn><Refresh /></QuickBtn>
        <QuickBtn><Caret2 /></QuickBtn>
      </QuickBar>
      <Title>5872: Conference - Event - EventPro</Title>
      <WinControls dim />
    </TitleRow>
    <TabRow $h={19} $pad={61}><TopTab $active $w={44} /></TabRow>
    <BackStrip $h={88} $line $pad="40px 0 0 6px">E</BackStrip>
    <BackStrip $h={32} $pad="6px 0 0 6px">E</BackStrip>
    <BackRow $pad={5}><ListIcon /></BackRow>
    <BackRow $pad={5}><ListIcon /></BackRow>
    <BackRow $pad={5}><ListIcon /></BackRow>
    <BackRow $pad={5}><ListIcon /></BackRow>
    <BackRow $pad={5}><ListIcon /></BackRow>
    <BackRow $pad={5}><ListIcon /></BackRow>
    <BackRow $pad={5}><ListIcon /></BackRow>
    <BackStrip $h={67} />
    <GrayBlock />
    <BackFooter>
      <Bed /><Factory /><Card />
    </BackFooter>
    <Status $h={21} />
  </Window>
);

const LocationWindow = () => (
  <Window $x={12} $y={34} $w={900} $h={428}>
    <LogoSpot><Logo /></LogoSpot>
    <TitleRow $h={27}>
      <QuickBar>
        <QuickBtn><CircleArrow /></QuickBtn>
        <QuickBtn><CircleArrow down c={TEAL} /></QuickBtn>
        <QuickBtn><Refresh /></QuickBtn>
        <QuickBtn><SaveIcon s={18} /></QuickBtn>
        <QuickBtn><SaveIcon s={18} kind="close" /></QuickBtn>
        <QuickBtn><BackArrow s={17} /></QuickBtn>
        <QuickBtn><Caret2 /></QuickBtn>
      </QuickBar>
      <Title>Mozart Ballroom - Event Location</Title>
      <WinControls />
    </TitleRow>
    <TabRow $h={20} />
    <BackRibbon>
      <BackGroup>
        <DocIcon s={16} w={1.5} />
        <CloneIcon s={18} />
        <BackGroupLabel>Record...</BackGroupLabel>
      </BackGroup>
      <BackIcons>
        <SaveIcon s={16} />
        <SaveIcon s={16} />
        <SaveIcon s={16} />
      </BackIcons>
    </BackRibbon>
    <BackFields>
      <BackRow $pad={1}>Description:</BackRow>
      <BackRow $pad={1}>Setup Type:</BackRow>
      <BackRow $pad={1}>Owner:</BackRow>
      <BackRow $pad={1}>Conflict:</BackRow>
    </BackFields>
    <BackFieldset>
      <Legend>Attendance</Legend>
      <BackRow $pad={1} $h={21}>Use Event Attendance:</BackRow>
      <BackRow $pad={1} $h={21}>Attendance:</BackRow>
    </BackFieldset>
    <BackTabs>
      <BackTab><Mic /> Setup</BackTab>
    </BackTabs>
    <BackPanel>
      <BackToolbar>
        <DocIcon s={13} w={1.5} />
        <CloneIcon s={14} />
      </BackToolbar>
      <BackHead>
        <BackCorner />
        <BackCell>Financial<br />Subgroup</BackCell>
      </BackHead>
      <BackGridRow>
        <BackCorner><RowCaret /></BackCorner>
        <BackCell $yellow>Catering</BackCell>
      </BackGridRow>
    </BackPanel>
    <Status $h={22} />
  </Window>
);

const CateringWindow = () => (
  <Window $x={82} $y={62} $w={899} $h={602}>
    <LogoSpot><Logo /></LogoSpot>
    <TitleRow $h={27}>
      <QuickBar>
        <QuickBtn><CircleArrow /></QuickBtn>
        <QuickBtn><CircleArrow down /></QuickBtn>
        <QuickBtn><Refresh /></QuickBtn>
        <QuickBtn><SaveIcon s={18} /></QuickBtn>
        <QuickBtn><SaveIcon s={18} kind="close" /></QuickBtn>
        <QuickBtn><BackArrow s={17} /></QuickBtn>
        <QuickBtn><Caret2 /></QuickBtn>
      </QuickBar>
      <Title>Dinner Buffet - Event Resource Catering</Title>
      <WinControls />
    </TitleRow>
    <TabRow $h={20}>
      <TopTab $active $w={44}>Home</TopTab>
      <CollapseBtn><ChevronUp size={14} strokeWidth={3} /></CollapseBtn>
    </TabRow>
    <Ribbon>
      <Group $w={100}>
        <GroupBody>
          <BigBtn $w={47}><BigIcon><DocIcon s={25} /></BigIcon>New</BigBtn>
          <BigBtn $w={48}><BigIcon><CloneIcon /></BigIcon>Clone...</BigBtn>
        </GroupBody>
        <GroupLabel>Records Creation</GroupLabel>
      </Group>
      <Sep />
      <Group $w={291}>
        <GroupBody>
          <BigBtn $w={46} $off><BigIcon><SaveIcon /></BigIcon>Save</BigBtn>
          <BigBtn $w={56} $off><BigIcon><SaveIcon kind="close" /></BigIcon>Save and Close</BigBtn>
          <BigBtn $w={86} $off><BigIcon><SaveIcon kind="new" /></BigIcon>Save and New</BigBtn>
          <BigBtn $w={54} $off><BigIcon><SaveIcon kind="clone" /></BigIcon>Save and Clone</BigBtn>
          <BigBtn $w={48} $off><BigIcon><BackArrow s={31} /></BigIcon>Cancel</BigBtn>
        </GroupBody>
        <GroupLabel>Save</GroupLabel>
      </Group>
      <Sep />
      <Group $w={99}>
        <GroupBody $pad={4}>
          <SmallStack $top={0}>
            <SmallBtn><SpellIcon />Check Spelling</SmallBtn>
            <SmallBtn><CalcIcon />Recalculate</SmallBtn>
            <SmallBtn><X size={16} color={ORANGE} strokeWidth={2.5} />Delete</SmallBtn>
          </SmallStack>
        </GroupBody>
        <GroupLabel>Edit</GroupLabel>
      </Group>
      <Sep />
      <Group $w={120}>
        <GroupBody>
          <BigBtn $w={118} $off><BigIcon><OpenRelatedIcon /></BigIcon>Open Related<br />Record</BigBtn>
        </GroupBody>
        <GroupLabel>Open Related Record</GroupLabel>
      </Group>
      <Sep />
      <Group $w={75}>
        <GroupBody $pad={3}>
          <SmallStack $top={7} $gap={13}>
            <SmallBtn><Refresh s={16} />Refresh</SmallBtn>
            <SmallBtn><History size={16} color="#3c78b8" strokeWidth={2.4} />Audit Log</SmallBtn>
          </SmallStack>
        </GroupBody>
        <GroupLabel>View</GroupLabel>
      </Group>
      <Sep />
      <Group $w={111}>
        <GroupBody $pad={5}>
          <SmallStack>
            <SmallBtn><Search size={15} color="#666" strokeWidth={2.5} style={{ transform: 'scaleX(-1)' }} />Find</SmallBtn>
            <SmallBtn $off><CircleArrow s={15} />Previous Record</SmallBtn>
            <SmallBtn $off><CircleArrow s={15} down />Next Record</SmallBtn>
          </SmallStack>
        </GroupBody>
        <GroupLabel>Records Navigation</GroupLabel>
      </Group>
      <Sep />
      <Group $w={48}>
        <GroupBody>
          <BigBtn $w={48}><BigIcon><CloseBig /></BigIcon>Close</BigBtn>
        </GroupBody>
        <GroupLabel>Close</GroupLabel>
      </Group>
      <Sep />
      <MiniLogoCell $bottom={10}><MiniLogo /><MiniName>EventPro</MiniName></MiniLogoCell>
    </Ribbon>
    <Body>
      <Main>
        <FormTop>
          <LeftCol>
            <FieldBox $w={473} $h={198}>
              <Legend>Configuration</Legend>
              <FormRows>
                {catering.map(([label, value], i) => (
                  <React.Fragment key={label}>
                    <span>{label}</span>
                    <Input $gray={i === 0}>
                      <InputText>{value}</InputText>
                      {(i === 1 || i === 2) && <Adorn><ClearIcon /></Adorn>}
                      {(i === 1 || i === 2) && <Adorn $w={8}><Chev /></Adorn>}
                      {i < 3 && <Adorn $w={17}><WinPick /></Adorn>}
                    </Input>
                  </React.Fragment>
                ))}
              </FormRows>
            </FieldBox>
            <LowerRow>
              <FieldBox $w={230} $h={134} $right={4} $top={4}>
                <Legend>Times</Legend>
                <FormRows>
                  <span>Use Owner Times:</span>
                  <Input><InputText>None</InputText><Adorn $gray><Chev /></Adorn></Input>
                  <span>Required From Time:</span>
                  <Input>6:00 PM</Input>
                  <span>Required To Time:</span>
                  <Input>7:30 PM</Input>
                </FormRows>
              </FieldBox>
              <Splitter><Dot /><Dot /><Dot /></Splitter>
              <FieldBox $w={230} $h={134} $top={4}>
                <Legend>Counts</Legend>
                <FormRows>
                  <span>Use Owner Counts:</span>
                  <Input><InputText>None</InputText></Input>
                  <span>Guaranteed Count:</span>
                  <Input />
                  <span>Actual Count:</span>
                  <Input />
                </FormRows>
              </FieldBox>
            </LowerRow>
          </LeftCol>
          <RightCol>
            <PageTabs>
              <PageTab $active $w={50}>Charges</PageTab>
              <PageTab $w={32}>Cost</PageTab>
              <PageTab $w={52}>Financial</PageTab>
            </PageTabs>
            <PagePanel>
              <ChargeGrid>
                <span>Lock Charges</span>
                <LockCell>
                  <Check />
                  <BillLabel>Bill To Type:</BillLabel>
                  <Input $w={57}><InputText>Event</InputText><Adorn $gray $w={9}><Chev /></Adorn></Input>
                </LockCell>
                <span>Charge Calculation:</span>
                <Input><InputText>Both</InputText><Adorn $gray $w={9}><Chev /></Adorn></Input>
                <span>Main Config Charge:</span>
                <Input $gray $end>$47.50</Input>
                <span>Total Main Config Charge:</span>
                <Input $gray $end>$4,750.00</Input>
              </ChargeGrid>
            </PagePanel>
          </RightCol>
        </FormTop>
        <NotesArea>
          <NoteTabs>
            <NoteTab $active $w={94}><OrgIcon />Configuration</NoteTab>
            <NoteTab $w={58}><NoteIcon />Notes</NoteTab>
            <NoteTab $w={126}><NoteIcon />Setup Requirements</NoteTab>
            <NoteTab $w={120}><NoteIcon />Other</NoteTab>
          </NoteTabs>
          <NotePanel>
            <NoteEditor>
              <NoteToolbar>
                <ToolIcon><SaveIcon s={15} /></ToolIcon>
                <ToolIcon><WordDoc /></ToolIcon>
                <ToolIcon><PreviewSmall /></ToolIcon>
                <ToolIcon><SmallFolder /></ToolIcon>
                <ToolIcon $w={20}><Squiggle /></ToolIcon>
                <ToolIcon $w={12}><TinyCaret /></ToolIcon>
                <Input $w={128}><InputText>Tahoma</InputText><Adorn $gray $w={9}><Chev /></Adorn></Input>
                <ToolIcon $w={4} />
                <Input $w={60}><InputText>8</InputText><Adorn $gray $w={9}><Chev /></Adorn></Input>
              </NoteToolbar>
            </NoteEditor>
            <NoteScroll>
              <ScrollArrow $h={22}><ChevronDown size={12} strokeWidth={3} /></ScrollArrow>
            </NoteScroll>
          </NotePanel>
        </NotesArea>
      </Main>
      <VScroll>
        <ScrollArrow><ChevronUp size={13} strokeWidth={3} /></ScrollArrow>
        <ScrollThumb $h={340} />
        <ScrollArrow $end><ChevronDown size={13} strokeWidth={3} /></ScrollArrow>
      </VScroll>
    </Body>
    <Status><Grip /></Status>
  </Window>
);

const WordWindow = () => (
  <Window $x={393} $y={310} $w={717} $h={301}>
    <LogoSpot $x={3} $y={1}><Logo /></LogoSpot>
    <TitleRow $h={27}>
      <QuickBar>
        <QuickBtn><SaveIcon s={18} c={DARK} /></QuickBtn>
        <QuickBtn><SaveIcon s={18} c={DARK} kind="new" /></QuickBtn>
        <QuickBtn><Caret2 /></QuickBtn>
      </QuickBar>
      <Title>Word Processor</Title>
      <WinControls />
    </TitleRow>
    <TabRow $h={20} $pad={61}>
      <TopTab $active $w={33}>File</TopTab>
      <TopTab $w={44}>Home</TopTab>
      <TopTab $w={48}>Insert</TopTab>
      <TopTab $w={76}>Page Layout</TopTab>
      <TopTab $w={74}>Mail Merge</TopTab>
      <TopTab $w={34}>View</TopTab>
      <TopTab $w={60}>Review</TopTab>
      <TopTab $w={66}>References</TopTab>
    </TabRow>
    <Ribbon $h={89} $thick>
      <Group $w={634}>
        <GroupBody>
          <BigBtn $w={46}><BigIcon><CloseBig s={24} /></BigIcon>Close</BigBtn>
          <BigBtn $w={42}><BigIcon><DocIcon s={28} /></BigIcon>New</BigBtn>
          <BigBtn $w={5} />
          <Sep $h={58} />
          <BigBtn $w={52}><BigIcon><Folder /></BigIcon>Open</BigBtn>
          <BigBtn $w={76}><BigIcon><LoadFolder /></BigIcon>Load Template</BigBtn>
          <BigBtn $w={6} />
          <Sep $h={58} />
          <BigBtn $w={52}><BigIcon><SaveIcon c={DARK} /></BigIcon>Save</BigBtn>
          <BigBtn $w={46}><BigIcon><SaveIcon c={DARK} kind="new" /></BigIcon>Save As</BigBtn>
          <BigBtn $w={62}><BigIcon><SaveIcon c={DARK} kind="dots" /></BigIcon>Save As Template</BigBtn>
          <BigBtn $w={1} />
          <Sep $h={58} />
          <BigBtn $w={52}><BigIcon><Printer /></BigIcon>Quick Print</BigBtn>
          <BigBtn $w={36}><BigIcon><Printer help /></BigIcon>Print</BigBtn>
          <BigBtn $w={58}><BigIcon><PreviewIcon /></BigIcon>Print Preview</BigBtn>
          <Sep $h={58} />
          <BigBtn $w={48} $off><BigIcon><BackArrow s={32} /></BigIcon>Undo</BigBtn>
          <BigBtn $w={43} $off><BigIcon><BackArrow s={32} flip /></BigIcon>Redo</BigBtn>
        </GroupBody>
        <GroupLabel>Common</GroupLabel>
      </Group>
      <Sep />
      <ExtraGroup $w={26}>
        <GroupBody>
          <SmallStack $gap={6} $top={2}>
            <GearDoc />
            <KeyIcon />
          </SmallStack>
        </GroupBody>
        <GroupLabel>I...</GroupLabel>
      </ExtraGroup>
      <Sep />
      <MiniLogoCell $bottom={12}><MiniLogo /><MiniName>EventPro</MiniName></MiniLogoCell>
    </Ribbon>
    <Workspace>
      <DocPane>
        <DocTop>
          <RulerSide>
            <CornerBtn>L</CornerBtn>
            <VRuler />
          </RulerSide>
          <Page>
            <HRuler />
            <Caret />
          </Page>
          <VScroll>
            <ScrollArrow><ChevronUp size={12} strokeWidth={3} /></ScrollArrow>
            <ScrollThumb $h={17} />
            <ScrollArrow $end><ChevronDown size={12} strokeWidth={3} /></ScrollArrow>
          </VScroll>
        </DocTop>
        <HScroll>
          <HArrow><ChevronLeft size={12} strokeWidth={3} /></HArrow>
          <HThumb $w={266} />
          <HArrow $end><ChevronRight size={12} strokeWidth={3} /></HArrow>
        </HScroll>
      </DocPane>
      <TaskPane>
        <TaskHead>
          <TaskName>Event Resource Catering</TaskName>
          <svg width="8" height="10" viewBox="0 0 8 10"><path d="M2 0h4v5h2v1H5v4H3V6H0V5h2Z" fill="#666" /></svg>
          <X size={11} color="#666" strokeWidth={2.6} />
        </TaskHead>
        <TaskBody>
          <TaskList>
            {taskItems.map((t, i) => (
              <TaskItem key={t} $first={i === 0}>
                {i === 6 && <Caretlet />}
                {t}
              </TaskItem>
            ))}
          </TaskList>
          <VScroll>
            <ScrollArrow $h={16}><ChevronUp size={12} strokeWidth={3} /></ScrollArrow>
            <ScrollThumb $h={17} />
            <ScrollArrow $end $h={16}><ChevronDown size={12} strokeWidth={3} /></ScrollArrow>
          </VScroll>
        </TaskBody>
      </TaskPane>
    </Workspace>
    <Status $h={23}><Grip /></Status>
  </Window>
);

export default function App() {
  return (
    <Desktop>
      <GlobalStyle />
      <EventWindow />
      <LocationWindow />
      <CateringWindow />
      <WordWindow />
      <Annotations width="1110" height="664" viewBox="0 0 1110 664">
        <polygon points="634,75 653,52 656,61 743,6 745,10 659,66 664,71" fill="#f00000" />
        <rect x="501" y="85" width="134" height="4" fill="#f00000" />
        <polygon points="973,448 993,424 997,433 1080,379 1083,384 1000,438 1002,442" fill="#f00000" />
        <rect x="911" y="461" width="133" height="5" fill="#f00000" />
        <ellipse cx="210" cy="552" rx="35" ry="14" fill="none" stroke="#e8101a" strokeWidth="2" />
        <ellipse cx="127" cy="581" rx="12" ry="14" fill="none" stroke="#e8101a" strokeWidth="2" />
      </Annotations>
    </Desktop>
  );
}
